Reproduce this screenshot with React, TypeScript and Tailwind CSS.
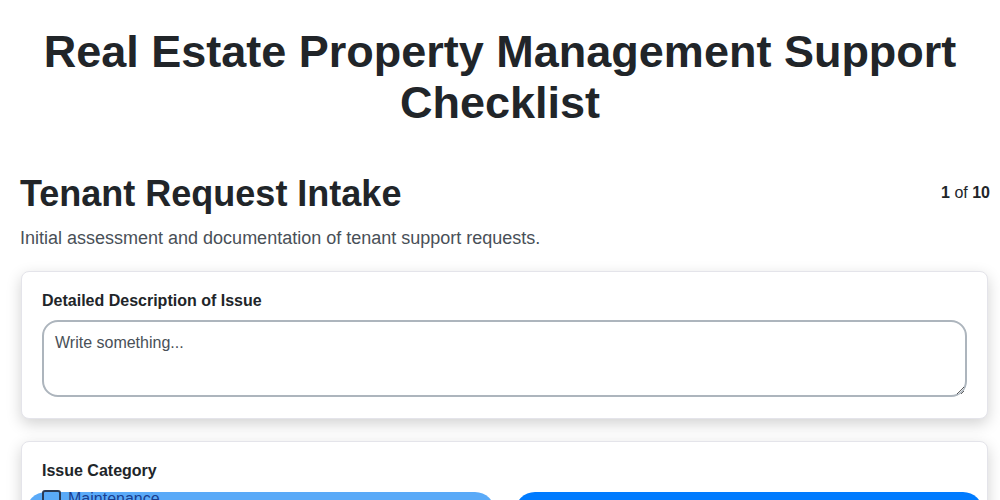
import React from 'react';

const categories = [
  { id: 'maintenance', label: 'Maintenance', active: false },
  { id: 'billing', label: 'Billing', active: true },
];

export default function App() {
  return (
    <div className="min-h-screen bg-white font-['Liberation_Sans',Arial,sans-serif] text-[#212529]">
      <h1 className="pt-[27px] text-center text-[45px] font-bold leading-[1.13]">
        Real Estate Property Management Support Checklist
      </h1>

      <div className="mt-[43px] px-5 pr-[10px]">
        <div className="flex items-center justify-between">
          <h2 className="text-[36px] font-bold leading-[1.2]">Tenant Request Intake</h2>
          <div className="text-base">
            <span className="font-bold">1</span> of <span className="font-bold">10</span>
          </div>
        </div>
        <p className="mt-[11px] text-[18px] leading-[1.4] text-[#495057]">
          Initial assessment and documentation of tenant support requests.
        </p>
      </div>

      <div className="mt-[20px] flex flex-col gap-[22px] pl-[21px] pr-[12px]">
        <div className="rounded-lg border border-[#e4e4ea] bg-white px-5 pb-[21px] pt-[17px] shadow-[0_5px_15px_rgba(0,0,0,0.18)]">
          <label className="block text-base font-bold leading-6">Detailed Description of Issue</label>
          <textarea
            placeholder="Write something..."
            className="mt-[7px] block h-[77px] w-full rounded-2xl border-2 border-[#adb5bd] px-[11px] py-[9px] text-base text-[#212529] placeholder:text-[#495057] outline-none"
          />
        </div>

        <div className="rounded-lg border border-[#e4e4ea] bg-white px-5 pb-5 pt-[17px] shadow-[0_5px_15px_rgba(0,0,0,0.18)]">
          <label className="block text-base font-bold leading-6">Issue Category</label>
          <div className="-mx-4 mt-[9px] grid grid-cols-2 gap-5">
            {categories.map(c => (
              <div
                key={c.id}
                className={
                  c.active
                    ? 'h-[60px] rounded-[20px] bg-[#007bff] text-white'
                    : 'h-[60px] rounded-[20px] bg-[#5aaaf8] text-[#1b3f8f]'
                }
              >
                {!c.active && (
                  <div className="-mt-[3px] ml-4 flex items-center gap-[7px]">
                    <span className="h-[19px] w-[19px] rounded-[3px] border-2 border-[#2b3a55] bg-[#5aaaf8]" />
                    <span className="text-base leading-5">{c.label}</span>
                  </div>
                )}
              </div>
            ))}
          </div>
        </div>
      </div>
    </div>
  );
}
